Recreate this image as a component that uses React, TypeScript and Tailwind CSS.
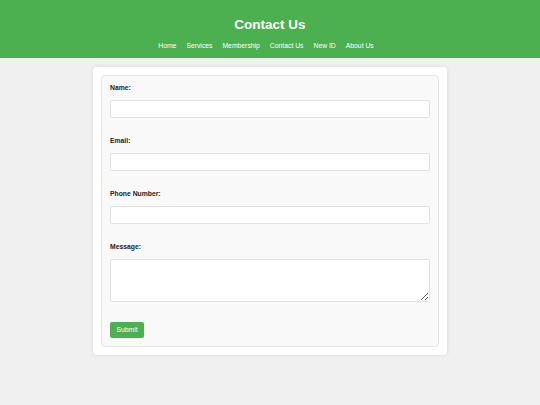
import React from "react";

export default function App() {
  const links = ["Home", "Services", "Membership", "Contact Us", "New ID", "About Us"];
  const fields = [
    { label: "Name:", type: "text" },
    { label: "Email:", type: "email" },
    { label: "Phone Number:", type: "tel" },
  ];
  return (
    <div className="min-h-[405px] bg-[#f0f0f0] font-['Liberation_Sans',Arial,sans-serif]">
      <header className="h-[58px] bg-[#4caf50] flex flex-col items-center pt-[17px]">
        <h1 className="text-[13.5px] leading-[16px] font-bold text-white">Contact Us</h1>
        <nav className="mt-[9px] flex gap-[10px] pr-[8px]">
          {links.map((l) => (
            <a key={l} className="text-[6.8px] leading-[8px] text-white">
              {l}
            </a>
          ))}
        </nav>
      </header>
      <main className="pt-[9px]">
        <div className="mx-auto w-[354px] bg-white rounded-[4px] p-[8px] shadow-[0_0_4px_rgba(0,0,0,0.1)]">
          <form className="bg-[#f9f9f9] border border-[#e4e4e4] rounded-[4px] px-[8px] pt-[8px] pb-[8px] flex flex-col">
            {fields.map((f, i) => (
              <div key={f.label} className={i > 0 ? "mt-[19px]" : ""}>
                <label className="block text-[6.8px] leading-[8px] font-bold text-[#222]">{f.label}</label>
                <input
                  type={f.type}
                  className="mt-[8px] block w-full h-[18px] bg-white border border-[#e2e2e2] rounded-[2px]"
                />
              </div>
            ))}
            <div className="mt-[19px]">
              <label className="block text-[6.8px] leading-[8px] font-bold text-[#222]">Message:</label>
              <textarea className="mt-[8px] block w-full h-[43px] bg-white border border-[#e2e2e2] rounded-[2px]" />
            </div>
            <div className="mt-[20px] flex">
              <button
                type="button"
                className="w-[34px] h-[16px] bg-[#4caf50] text-white text-[6.8px] leading-[8px] rounded-[2px]"
              >
                Submit
              </button>
            </div>
          </form>
        </div>
      </main>
    </div>
  );
}
